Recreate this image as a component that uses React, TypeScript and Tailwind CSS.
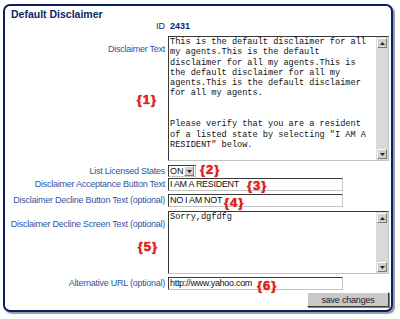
import React from 'react';

const sans = "font-['Liberation_Sans',Arial,Helvetica,sans-serif]";
const mono = "font-['Liberation_Mono','Courier_New',monospace]";
const label = `text-[9px] leading-[11px] tracking-[-0.25px] text-[#2f55a4] text-right ${sans}`;
const tag = `font-bold text-[13px] leading-[14px] tracking-[1px] text-[#ec1c1c] [text-shadow:0_0_1px_#a00000] ${sans}`;
const inset = 'border border-t-[#3a3a3a] border-l-[#3a3a3a] border-r-[#c4c4c4] border-b-[#c4c4c4] bg-white';

const disclaimer = [
  'This is the default disclaimer for all',
  'my agents.This is the default',
  'disclaimer for all my agents.This is',
  'the default disclaimer for all my',
  'agents.This is the default disclaimer',
  'for all my agents.',
  '',
  '',
  'Please verify that you are a resident',
  'of a listed state by selecting "I AM A',
  'RESIDENT" below.',
];

const ArrowBtn: React.FC<{ up?: boolean }> = ({ up }) => (
  <div className="flex h-[10px] w-[10px] items-center justify-center border border-t-white border-l-white border-r-[#7a7a7a] border-b-[#7a7a7a] bg-[#d4d0c8]">
    <svg width="5" height="3" viewBox="0 0 5 3">
      {up ? <polygon points="0,3 5,3 2.5,0" fill="#222" /> : <polygon points="0,0 5,0 2.5,3" fill="#222" />}
    </svg>
  </div>
);

const TextBox: React.FC<{ lines: string[]; height: string }> = ({ lines, height }) => (
  <div className={`flex w-[221px] ${height} ${inset}`}>
    <div className={`flex-1 overflow-hidden whitespace-pre pl-[1px] text-[8.6px] leading-[10.3px] text-[#111] ${mono}`}>
      {lines.map((l, i) => (
        <div key={i} className="h-[10.3px]">{l}</div>
      ))}
    </div>
    <div className="flex w-[12px] flex-col items-center justify-between bg-[#d9d9d9] py-[1px]">
      <ArrowBtn up />
      <ArrowBtn />
    </div>
  </div>
);

const Field: React.FC<{ value: string; children?: React.ReactNode }> = ({ value, children }) => (
  <div className={`relative h-[13px] w-[175px] ${inset}`}>
    <div className={`pl-[1px] text-[9px] leading-[11px] tracking-[-0.3px] text-[#111] ${sans}`}>{value}</div>
    {children}
  </div>
);

export default function App() {
  return (
    <div className="h-[319px] w-[400px] overflow-hidden bg-white">
      <div className="ml-[3px] mt-[4px] flex h-[308px] w-[390px] flex-col rounded-[7px] border-2 border-[#0c1f66] bg-white shadow-[2px_2px_1px_#9a9a9a]">
        <div className={`mt-[1px] pl-[6px] text-[10.5px] font-bold leading-[14px] text-[#0c2569] ${sans}`}>Default Disclaimer</div>

        <div className="flex h-[10px] items-center">
          <div className={`w-[160px] text-right text-[9px] leading-[10px] text-[#0c2569] ${sans}`}>ID</div>
          <div className={`ml-[5px] text-[9px] font-bold leading-[10px] text-[#0c2569] ${sans}`}>2431</div>
        </div>

        <div className="mt-[5px] flex">
          <div className="flex w-[160px] flex-col items-end pt-[8px]">
            <div className={label}>Disclaimer Text</div>
            <div className={`mr-[8px] mt-[38px] ${tag}`}>{'{1}'}</div>
          </div>
          <div className="ml-[3px]">
            <TextBox lines={disclaimer} height="h-[125px]" />
          </div>
        </div>

        <div className="mt-[4px] flex h-[12px] items-center">
          <div className={`w-[160px] ${label}`}>List Licensed States</div>
          <div className="ml-[3px] flex items-center">
            <div className={`flex h-[12px] w-[28px] items-center justify-between pr-[1px] ${inset}`}>
              <span className={`pl-[1px] text-[9px] leading-[10px] text-[#111] ${sans}`}>ON</span>
              <ArrowBtn />
            </div>
            <span className={`-mt-[3px] ml-[4px] ${tag}`}>{'{2}'}</span>
          </div>
        </div>

        <div className="mt-[1px] flex h-[13px] items-center">
          <div className={`w-[160px] ${label}`}>Disclaimer Acceptance Button Text</div>
          <div className="ml-[3px]">
            <Field value="I AM A RESIDENT">
              <span className={`absolute left-[78px] top-[0px] ${tag}`}>{'{3}'}</span>
            </Field>
          </div>
        </div>

        <div className="mt-[3px] flex h-[13px] items-center">
          <div className={`w-[160px] ${label}`}>Disclaimer Decline Button Text (optional)</div>
          <div className="ml-[3px]">
            <Field value="NO I AM NOT">
              <span className={`absolute left-[55px] top-[1px] ${tag}`}>{'{4}'}</span>
            </Field>
          </div>
        </div>

        <div className="mt-[4px] flex">
          <div className="flex w-[160px] flex-col items-end pt-[8px]">
            <div className={label}>Disclaimer Decline Screen Text (optional)</div>
            <div className={`mr-[7px] mt-[10px] ${tag}`}>{'{5}'}</div>
          </div>
          <div className="ml-[3px]">
            <TextBox lines={['Sorry,dgfdfg']} height="h-[63px]" />
          </div>
        </div>

        <div className="mt-[3px] flex h-[13px] items-center">
          <div className={`w-[160px] ${label}`}>Alternative URL (optional)</div>
          <div className="ml-[3px]">
            <Field value="http://www.yahoo.com">
              <span className={`absolute left-[88px] top-[1px] ${tag}`}>{'{6}'}</span>
            </Field>
          </div>
        </div>

        <div className="mt-[2px] flex justify-end pr-[2px]">
          <button className={`h-[15px] w-[82px] border border-t-white border-l-white border-r-[#404040] border-b-[#404040] bg-[#c8c8c8] text-[9px] leading-[12px] tracking-[-0.2px] text-[#222] shadow-[1px_1px_0_#808080] ${sans}`}>
            save changes
          </button>
        </div>
      </div>
    </div>
  );
}
